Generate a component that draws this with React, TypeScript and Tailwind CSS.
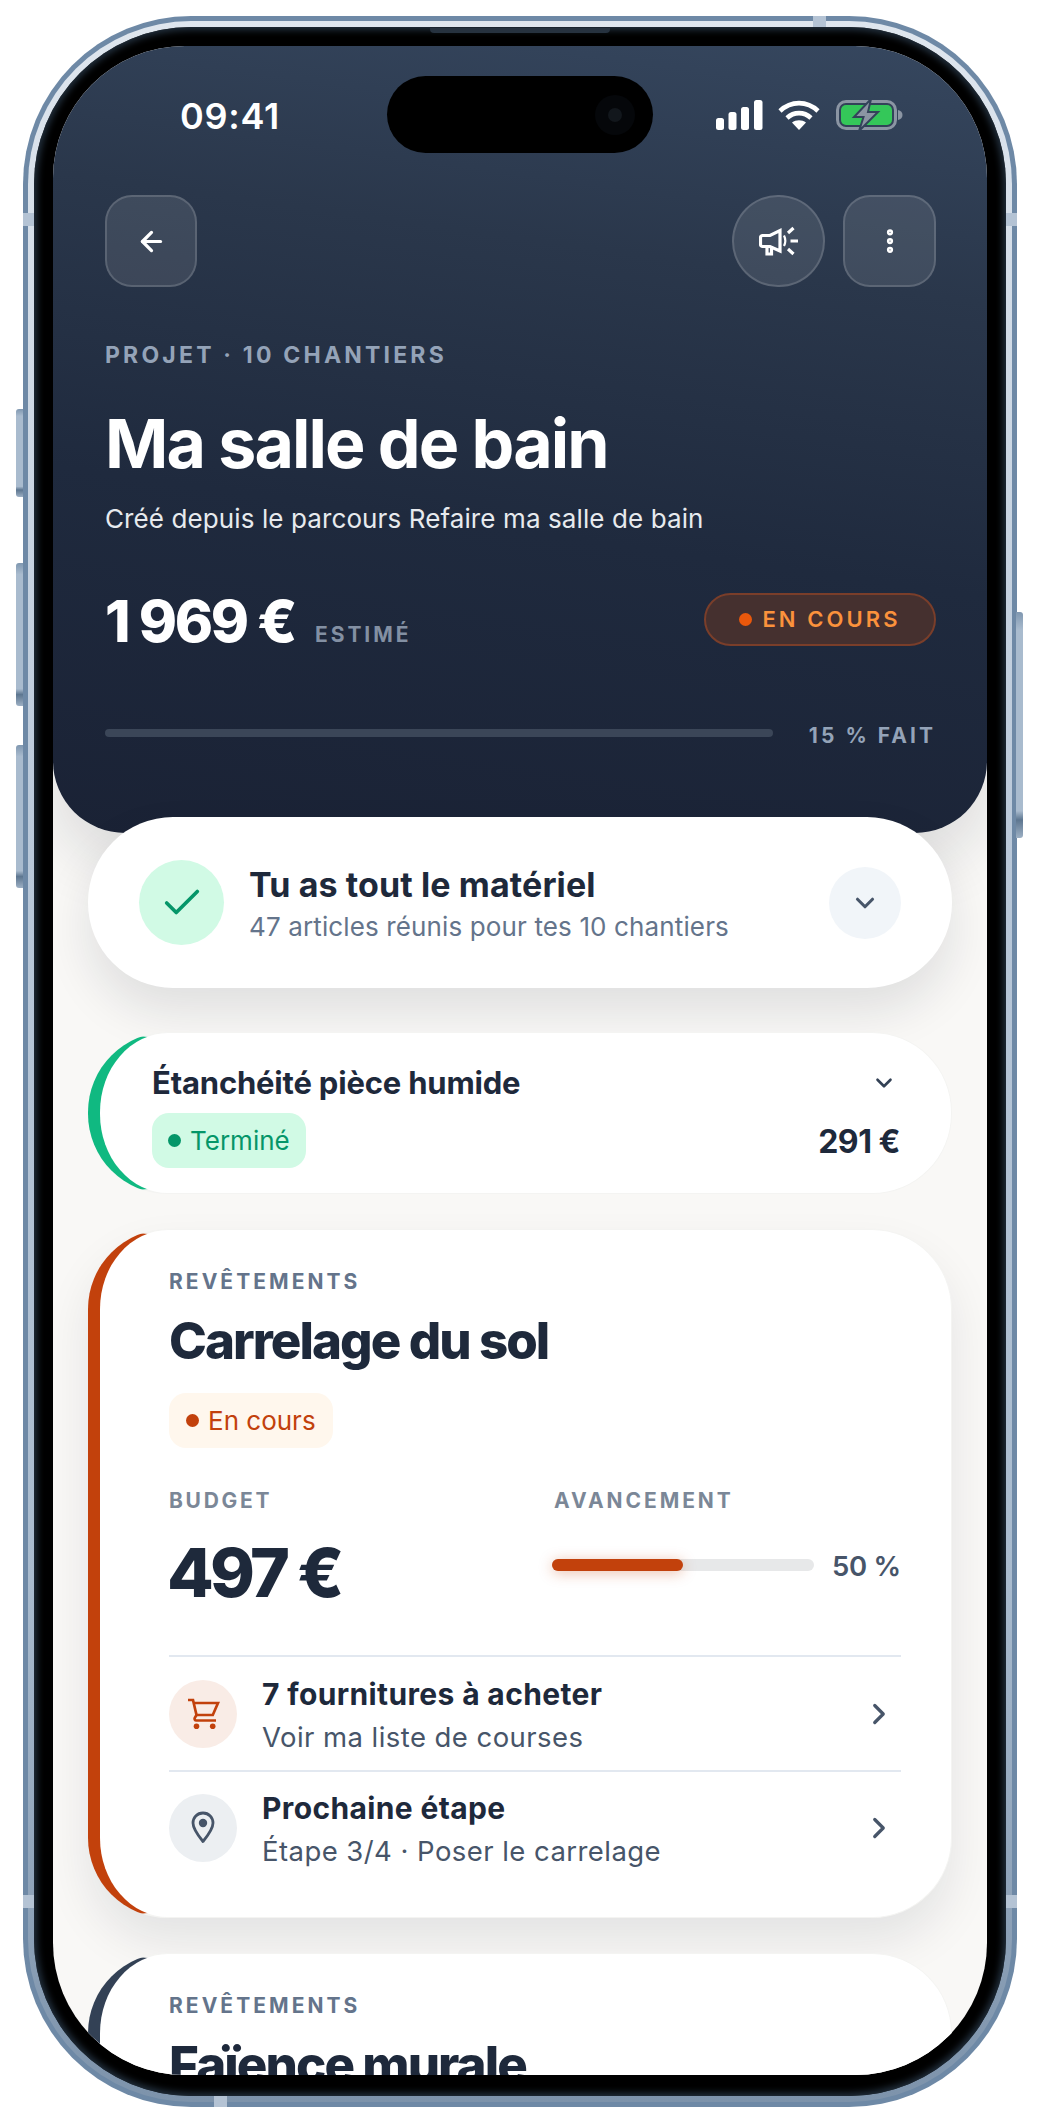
import React from 'react';
import { ArrowLeft, Check, ChevronDown, ChevronRight, EllipsisVertical } from 'lucide-react';

const Band = ({ className }: { className: string }) => (
  <div className={`absolute bg-[#b4c3d4] ${className}`}></div>
);

const SideButton = ({ className }: { className: string }) => (
  <div className={`absolute w-[7px] bg-[linear-gradient(to_bottom,#7f97b0,#a9bbce_8%,#a9bbce_88%,#5d7690_92%,#9db0c4)] ${className}`}></div>
);

const StatusIcons = () => (
  <div className="flex items-center">
    <svg width="47" height="30" viewBox="0 0 47 30" fill="white">
      <rect x="0" y="18" width="8" height="12" rx="2.5" />
      <rect x="12.5" y="12" width="8" height="18" rx="2.5" />
      <rect x="25" y="7" width="8" height="23" rx="2.5" />
      <rect x="38" y="0" width="8.5" height="30" rx="2.5" />
    </svg>
    <svg className="ml-[15px]" width="42" height="30" viewBox="0 0 42 30" fill="none" stroke="white" strokeWidth="4.6">
      <path d="M2 11C13 0.5 29 0.5 40 11" />
      <path d="M9 18C16 11.5 26 11.5 33 18" />
      <path d="M21 30L14 22.6C18 19.4 24 19.4 28 22.6Z" fill="white" stroke="none" />
    </svg>
    <svg className="ml-[16px]" width="67" height="32" viewBox="0 0 67 32" fill="none">
      <rect x="1.5" y="2.5" width="58" height="27" rx="8.5" stroke="#8b95a3" strokeWidth="3" />
      <rect x="5" y="6" width="51" height="20" rx="5" fill="#34c759" />
      <path d="M62 11c3 .5 4.5 2.5 4.5 5s-1.5 4.500-4.500 5z" fill="#8b95a3" />
      <path d="M35 0L18 18h9.500L23 32l19-19H32z" fill="#8b95a3" stroke="#33435a" strokeWidth="2" />
    </svg>
  </div>
);

const Megaphone = () => (
  <svg width="40" height="30" viewBox="0 0 40 30" fill="none" stroke="white" strokeWidth="3.200">
    <path d="M3.500 9.500H11L21 4.500V25L11 20.500H3.500C2.500 20.500 1.500 19.500 1.500 18.500V11.500C1.500 10.500 2.500 9.500 3.500 9.500Z" />
    <path d="M8 20.500V28H12.500V20.500" />
    <path d="M25 9.500C26.500 12.500 26.500 17 25 20" strokeWidth="2.200" />
    <path d="M29 7L34.500 2M31.500 15H39M29 23L34.500 28" />
  </svg>
);

const Cart = () => (
  <svg width="33" height="32" viewBox="0 0 33 32" fill="none" stroke="#c2410c" strokeWidth="2.700">
    <path d="M1 2H6L9.500 17L7.800 19.800C7.200 21.200 7.800 22.500 9.300 22.500H29" />
    <path d="M6.800 5H31L25.800 17H9.500" />
    <circle cx="9.500" cy="28.300" r="2.800" fill="#c2410c" stroke="none" />
    <circle cx="25.700" cy="28.300" r="2.800" fill="#c2410c" stroke="none" />
  </svg>
);

const CardShell = ({ accent, children, className }: { accent: string; children: React.ReactNode; className: string }) => (
  <div className={`rounded-[80px] border border-l-[12px] border-y-[#f4f4f2] border-r-[#f4f4f2] bg-white ${accent} ${className}`}>
    {children}
  </div>
);

const LinkRow = ({ icon, iconBg, title, sub, last }: { icon: React.ReactNode; iconBg: string; title: string; sub: string; last?: boolean }) => (
  <div className={`flex items-center border-t-2 border-[#e2e8f0] ${last ? 'h-[113px]' : 'h-[115px]'}`}>
    <div className={`flex h-[68px] w-[68px] shrink-0 items-center justify-center rounded-full ${iconBg}`}>{icon}</div>
    <div className="ml-[25px] flex-1 pt-[5px]">
      <div className="text-[30px] leading-[41px] font-bold tracking-[0.012em] text-[#1e293b]">{title}</div>
      <div className="text-[27.500px] leading-[44px] tracking-[0.016em] text-[#475569]">{sub}</div>
    </div>
    <ChevronRight className="mr-[5px] text-[#475569]" size={34} strokeWidth={2.300} />
  </div>
);

const App: React.FC = () => {
  return (
    <div className="h-[2122px] w-[1040px] overflow-hidden bg-white pt-[16px] pl-[23px] font-['Inter','Noto_Sans',sans-serif]">
      {/* phone frame */}
      <div className="relative h-[2091px] w-[994px] rounded-[168px] bg-[#6e89a6] p-[5px]">
        <SideButton className="top-[393px] -left-[7px] h-[88px] rounded-l-[3px]" />
        <SideButton className="top-[547px] -left-[7px] h-[143px] rounded-l-[3px]" />
        <SideButton className="top-[729px] -left-[7px] h-[143px] rounded-l-[3px]" />
        <SideButton className="top-[596px] -right-[6px] h-[226px] rounded-r-[3px]" />
        <div className="h-full w-full rounded-[163px] bg-[linear-gradient(to_bottom,#dfe6ee,#b9c8d9_40%,#a9bbce_75%,#7d93ab)] p-[6px]">
          <div className="relative h-full w-full rounded-[157px] bg-black p-[19px] pb-[20px] shadow-[inset_0_0_7px_3px_#23313f]">
            <div className="absolute top-[1px] left-[396px] h-[5px] w-[180px] rounded-b-[4px] bg-[#26323f]"></div>
            {/* screen */}
            <div className="relative h-[2029px] w-[934px] overflow-hidden rounded-[132px] bg-[#f9f8f6]">
              {/* header */}
              <div className="rounded-b-[72px] bg-[linear-gradient(188deg,#36475f_0%,#2a374b_28%,#1f2a3e_60%,#1a2235_100%)] pb-[88px] shadow-[0_30px_60px_rgba(15,23,42,0.12)]">
                <div className="flex pt-[30px]">
                  <div className="flex h-[77px] w-[334px] items-center pt-[3px] pl-[127px] text-[36px] font-semibold tracking-[0.020em] text-white">09:41</div>
                  <div className="relative h-[77px] w-[266px] rounded-full bg-black">
                    <div className="absolute top-[19px] right-[18px] flex h-[40px] w-[40px] items-center justify-center rounded-full bg-[#05070a]">
                      <div className="h-[14px] w-[14px] rounded-full bg-[#12171c]"></div>
                    </div>
                  </div>
                  <div className="flex h-[77px] items-center pl-[63px]">
                    <StatusIcons />
                  </div>
                </div>

                <div className="mt-[42px] flex items-center justify-between pr-[51px] pl-[52px]">
                  <button className="flex h-[92px] w-[92px] items-center justify-center rounded-[27px] border-2 border-white/15 bg-white/10 text-white">
                    <ArrowLeft size={31} strokeWidth={2.500} />
                  </button>
                  <div className="flex gap-[18px]">
                    <button className="flex h-[92px] w-[93px] items-center justify-center rounded-full border-2 border-white/15 bg-white/10">
                      <Megaphone />
                    </button>
                    <button className="flex h-[92px] w-[93px] items-center justify-center rounded-[27px] border-2 border-white/15 bg-white/10 text-white">
                      <EllipsisVertical size={30} strokeWidth={3} />
                    </button>
                  </div>
                </div>

                <div className="pr-[51px] pl-[52px]">
                  <div className="mt-[54px] text-[23px] leading-[28px] font-bold tracking-[0.139em] text-[#94a3b8]">PROJET · 10 CHANTIERS</div>
                  <h1 className="mt-[36px] text-[68px] leading-[76px] font-bold tracking-[-0.028em] text-white">Ma salle de bain</h1>
                  <p className="mt-[21px] text-[26px] leading-[34px] tracking-[0.004em] text-[#e7eaee]">Créé depuis le parcours Refaire ma salle de bain</p>

                  <div className="mt-[53px] flex h-[64px] items-center justify-between">
                    <div className="flex items-baseline">
                      <span className="text-[58px] leading-[64px] font-extrabold tracking-[-0.040em] text-white">1 969 €</span>
                      <span className="ml-[20px] text-[21px] font-bold tracking-[0.140em] text-[#8390a3]">ESTIMÉ</span>
                    </div>
                    <div className="mb-[4px] flex h-[53px] w-[232px] items-center justify-center gap-[10px] rounded-full border-2 border-[#7a3e2a] bg-[#45302f]">
                      <span className="h-[13px] w-[13px] rounded-full bg-[#ea580c]"></span>
                      <span className="text-[22px] font-semibold tracking-[0.140em] text-[#fb923c]">EN COURS</span>
                    </div>
                  </div>

                  <div className="mt-[68px] flex h-[24px] items-center justify-between">
                    <div className="h-[8px] w-[668px] rounded-full bg-[#3b4658]"></div>
                    <span className="pt-[5px] text-[21px] font-bold tracking-[0.145em] text-[#94a3b8]">15 % FAIT</span>
                  </div>
                </div>
              </div>

              <div className="relative px-[35px]">
                {/* matériel */}
                <div className="relative -mt-[16px] flex h-[171px] items-center rounded-[85px] bg-white pr-[51px] pl-[51px] shadow-[0_24px_48px_rgba(15,23,42,0.11)]">
                  <div className="flex h-[85px] w-[85px] shrink-0 items-center justify-center rounded-full bg-[#d1fae5] text-[#059669]">
                    <Check size={46} strokeWidth={1.900} />
                  </div>
                  <div className="ml-[25px] flex-1 pt-[3px]">
                    <div className="text-[34px] leading-[45px] font-bold tracking-[0.003em] text-[#1e293b]">Tu as tout le matériel</div>
                    <div className="text-[26px] leading-[39px] tracking-[0.005em] text-[#64748b]">47 articles réunis pour tes 10 chantiers</div>
                  </div>
                  <div className="flex h-[72px] w-[72px] items-center justify-center rounded-full bg-[#f1f5f9] text-[#475569]">
                    <ChevronDown size={30} strokeWidth={2.500} />
                  </div>
                </div>

                {/* étanchéité */}
                <CardShell accent="border-l-[#10b981]" className="relative mt-[44px] h-[162px] pt-[31px] pr-[51px] pl-[52px]">
                  <div className="flex items-center justify-between">
                    <div className="text-[31px] leading-[38px] font-bold tracking-[-0.006em] text-[#1e293b]">Étanchéité pièce humide</div>
                    <ChevronDown className="mr-[3px] text-[#334155]" size={26} strokeWidth={2.400} />
                  </div>
                  <div className="mt-[11px] flex items-center justify-between">
                    <div className="flex h-[55px] items-center gap-[9px] rounded-[17px] bg-[#d1fae5] px-[16px] text-[26px] text-[#059669]">
                      <span className="h-[13px] w-[13px] rounded-full bg-[#059669]"></span>
                      Terminé
                    </div>
                    <div className="pt-[2px] text-[32px] font-bold tracking-[-0.015em] text-[#1e293b]">291 €</div>
                  </div>
                </CardShell>

                {/* carrelage */}
                <CardShell accent="border-l-[#c2410c]" className="relative mt-[35px] h-[689px] pt-[39px] pr-[50px] pl-[69px] shadow-[0_24px_48px_rgba(15,23,42,0.09)]">
                  <div className="text-[21px] leading-[26px] font-bold tracking-[0.145em] text-[#64748b]">REVÊTEMENTS</div>
                  <h2 className="mt-[16px] text-[51px] leading-[60px] font-extrabold tracking-[-0.038em] text-[#1e293b]">Carrelage du sol</h2>
                  <div className="mt-[22px] flex h-[55px] w-fit items-center gap-[9px] rounded-[17px] bg-[#fff7ed] px-[17px] text-[26px] text-[#c2410c]">
                    <span className="h-[13px] w-[13px] rounded-full bg-[#c2410c]"></span>
                    En cours
                  </div>
                  <div className="mt-[40px] grid h-[122px] grid-cols-[383px_1fr]">
                    <div>
                      <div className="text-[21px] leading-[26px] font-bold tracking-[0.130em] text-[#7b8797]">BUDGET</div>
                      <div className="mt-[22px] -ml-[2px] text-[68px] leading-[72px] font-extrabold tracking-[-0.055em] text-[#1e293b]">497 €</div>
                    </div>
                    <div>
                      <div className="pl-[2px] text-[21px] leading-[26px] font-bold tracking-[0.140em] text-[#7b8797]">AVANCEMENT</div>
                      <div className="mt-[33px] flex h-[36px] items-center">
                        <div className="h-[12px] w-[262px] shrink-0 rounded-full bg-[#e7e8e9]">
                          <div className="h-full w-[131px] rounded-full bg-[#c2410c] shadow-[0_2px_14px_rgba(194,65,12,0.35)]"></div>
                        </div>
                        <span className="ml-[18px] pt-[3px] text-[27.500px] font-semibold tracking-[-0.010em] whitespace-nowrap text-[#475569]">50 %</span>
                      </div>
                    </div>
                  </div>
                  <div className="mt-[45px]">
                    <LinkRow
                      icon={<Cart />}
                      iconBg="bg-[#f9ece6]"
                      title="7 fournitures à acheter"
                      sub="Voir ma liste de courses"
                    />
                    <LinkRow
                      last
                      icon={
                        <svg width="24" height="33" viewBox="0 0 24 33" fill="none">
                          <path d="M12 2C6 2 2 6.500 2 12C2 18 7.500 25 12 30.500C16.500 25 22 18 22 12C22 6.500 18 2 12 2Z" stroke="#475569" strokeWidth="2.800" strokeLinejoin="round" />
                          <circle cx="12" cy="12" r="4.200" fill="#475569" />
                        </svg>
                      }
                      iconBg="bg-[#eceff2]"
                      title="Prochaine étape"
                      sub="Étape 3/4 · Poser le carrelage"
                    />
                  </div>
                </CardShell>

                {/* faïence, coupée par le bas de l'écran */}
                <CardShell accent="border-l-[#334155]" className="relative mt-[35px] h-[300px] pt-[39px] pr-[50px] pl-[69px]">
                  <div className="text-[21px] leading-[26px] font-bold tracking-[0.145em] text-[#64748b]">REVÊTEMENTS</div>
                  <h2 className="mt-[16px] text-[51px] leading-[60px] font-extrabold tracking-[-0.038em] text-[#1e293b]">Faïence murale</h2>
                </CardShell>
              </div>
            </div>
          </div>
        </div>
        <Band className="top-[197px] left-0 h-[13px] w-[11px]" />
        <Band className="top-[197px] right-0 h-[13px] w-[11px]" />
        <Band className="top-0 left-[790px] h-[11px] w-[13px]" />
        <Band className="bottom-0 left-[191px] h-[11px] w-[13px] bg-[#8ba0b6]" />
        <Band className="bottom-[199px] left-0 h-[13px] w-[11px] bg-[#8ba0b6]" />
        <Band className="right-0 bottom-[199px] h-[13px] w-[11px] bg-[#8ba0b6]" />
      </div>
    </div>
  );
};

export default App;
